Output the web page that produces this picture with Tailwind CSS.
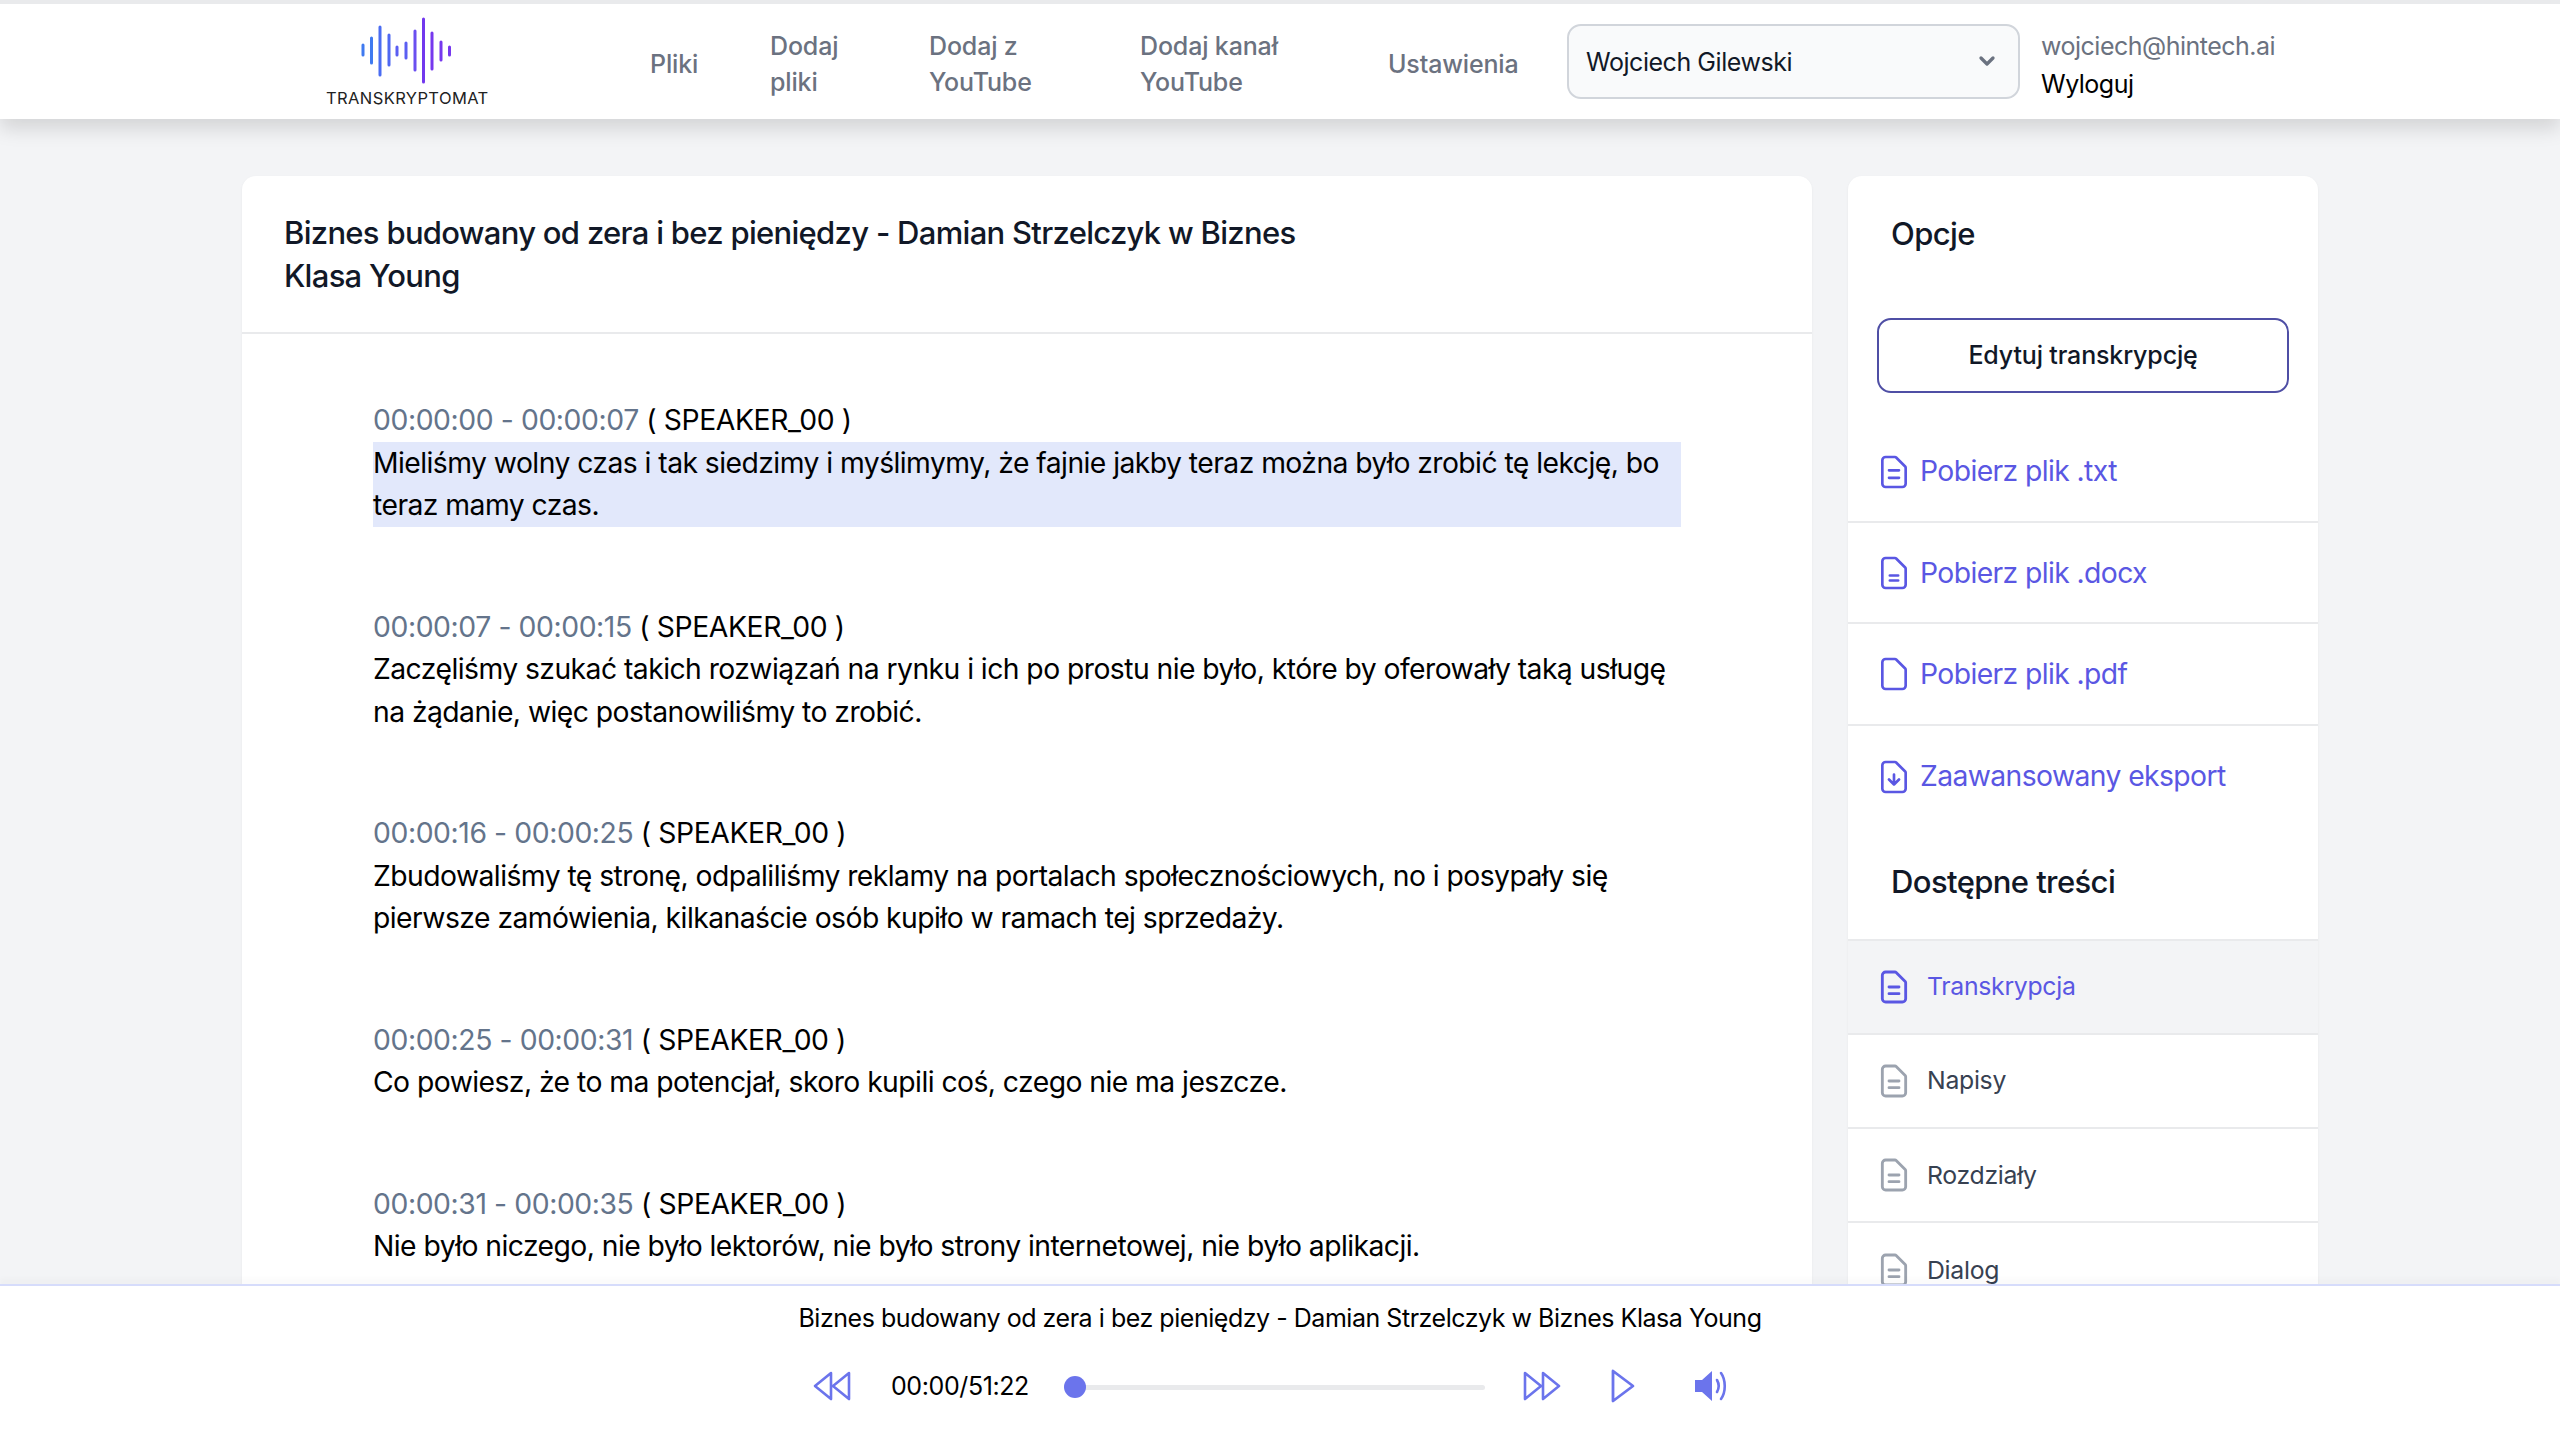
<!DOCTYPE html>
<html lang="pl">
<head>
<meta charset="utf-8">
<script src="https://cdn.jsdelivr.net/npm/@tailwindcss/browser@4"></script>
<title>Transkryptomat</title>
</head>
<body class="font-['Inter',sans-serif] bg-[#f3f4f6] text-black">
<div class="h-[1449px] flex flex-col overflow-hidden">
  <header class="relative z-10 h-[119px] shrink-0 bg-white border-t-[4px] border-[#e9eaec] shadow-[0_10px_18px_rgba(0,0,0,0.13)] flex items-center text-[25px] font-medium tracking-[-0.15px] text-[#6b7280] leading-[36px]">
    <div class="w-[650px] pl-[326px] shrink-0 flex flex-col items-start mt-[1px]">
      <svg class="ml-[33px] w-[96px] h-[70px]" viewBox="0 0 96 70" fill="none" stroke-width="3" stroke-linecap="round">
        <path stroke="#3f7af0" d="M4 29V39M12.500 22V47"/>
        <path stroke="#4a6cf2" d="M21 11V59"/>
        <path stroke="#4f68f2" d="M30 19V49"/>
        <path stroke="#5a5ef2" d="M38 31V39M47 27V42"/>
        <path stroke="#6a4ff0" d="M56 15V54"/>
        <path stroke="#7238ee" d="M64.500 3V66"/>
        <path stroke="#7638ee" d="M73 17V53M82 26V44M90.500 31V39"/>
      </svg>
      <span class="text-[16.500px] leading-[20px] font-normal text-[#222] tracking-[0.4px] mt-[2px]">TRANSKRYPTOMAT</span>
    </div>
    <a class="w-[120px] shrink-0 mt-[5px]">Pliki</a>
    <a class="w-[159px] shrink-0 mt-[5px]">Dodaj<br>pliki</a>
    <a class="w-[211px] shrink-0 mt-[5px]">Dodaj z<br>YouTube</a>
    <a class="w-[248px] shrink-0 mt-[5px]">Dodaj kanał<br>YouTube</a>
    <a class="w-[179px] shrink-0 mt-[5px]">Ustawienia</a>
    <div class="w-[453px] h-[75px] shrink-0 -mt-[1px] rounded-[14px] border-2 border-[#d1d5db] bg-[#f9fafb] flex items-center justify-between pl-[17px] pr-[16px] text-[#111827] font-normal tracking-[-0.45px]">
      <span class="mt-[2px]">Wojciech Gilewski</span>
      <svg class="w-[30px] h-[30px] text-[#6b7280]" viewBox="0 0 20 20" fill="none" stroke="currentColor" stroke-width="2.200" stroke-linecap="round" stroke-linejoin="round"><path d="M6 8l4 4 4-4"/></svg>
    </div>
    <div class="ml-[21px] flex flex-col font-normal text-[25px] leading-[38px] tracking-[-0.5px] mt-[6px]">
      <span class="text-[#6b7280]">wojciech@hintech.ai</span>
      <span class="text-black">Wyloguj</span>
    </div>
  </header>

  <main class="flex-1 min-h-0 overflow-hidden pt-[57px] pl-[242px] flex items-start gap-[36px]">
    <section class="w-[1570px] min-h-[1300px] shrink-0 bg-white rounded-t-[14px] shadow-[0_1px_3px_rgba(0,0,0,0.05)]">
      <div class="h-[158px] border-b-2 border-[#e9eaec] pl-[42px] pt-[36px]">
        <h1 class="w-[1040px] text-[31px] leading-[42.500px] font-medium tracking-[-0.7px] text-[#111827]">Biznes budowany od zera i bez pieniędzy - Damian Strzelczyk w Biznes Klasa Young</h1>
      </div>
      <div class="pt-[65px] px-[131px] text-[28.300px] leading-[42.500px] tracking-[-0.55px] flex flex-col gap-[79px]">
        <div><div class="tracking-[-0.4px]"><span class="text-[#64748b]">00:00:00 - 00:00:07</span> ( SPEAKER_00 )</div><p class="bg-[#e2e8fb]">Mieliśmy wolny czas i tak siedzimy i myślimymy, że fajnie jakby teraz można było zrobić tę lekcję, bo teraz mamy czas.</p></div>
        <div><div class="tracking-[-0.4px]"><span class="text-[#64748b]">00:00:07 - 00:00:15</span> ( SPEAKER_00 )</div><p>Zaczęliśmy szukać takich rozwiązań na rynku i ich po prostu nie było, które by oferowały taką usługę na żądanie, więc postanowiliśmy to zrobić.</p></div>
        <div><div class="tracking-[-0.4px]"><span class="text-[#64748b]">00:00:16 - 00:00:25</span> ( SPEAKER_00 )</div><p>Zbudowaliśmy tę stronę, odpaliliśmy reklamy na portalach społecznościowych, no i posypały się pierwsze zamówienia, kilkanaście osób kupiło w ramach tej sprzedaży.</p></div>
        <div><div class="tracking-[-0.4px]"><span class="text-[#64748b]">00:00:25 - 00:00:31</span> ( SPEAKER_00 )</div><p>Co powiesz, że to ma potencjał, skoro kupili coś, czego nie ma jeszcze.</p></div>
        <div><div class="tracking-[-0.4px]"><span class="text-[#64748b]">00:00:31 - 00:00:35</span> ( SPEAKER_00 )</div><p>Nie było niczego, nie było lektorów, nie było strony internetowej, nie było aplikacji.</p></div>
      </div>
    </section>

    <aside class="w-[470px] shrink-0 bg-white rounded-t-[14px] shadow-[0_1px_3px_rgba(0,0,0,0.05)]">
      <h2 class="pl-[43px] pt-[36px] text-[31px] leading-[43px] font-medium tracking-[-0.6px] text-[#111827]">Opcje</h2>
      <div class="mx-[29px] mt-[63px] h-[75px] rounded-[14px] border-[2.500px] border-[#4f4fa5] flex items-center justify-center text-[25px] font-medium tracking-[-0.15px] text-[#111827]">Edytuj transkrypcję</div>
      <div class="mt-[29px] text-[#5a57e3] text-[28.300px] tracking-[-0.6px]">
        <a class="h-[101.200px] border-b-2 border-[#e9eaec] flex items-center pl-[27px] gap-[7px]">
          <svg class="w-[40px] h-[40px] -ml-[1px] -mr-[1px] mt-[1px]" viewBox="0 0 24 24" fill="none" stroke="currentColor" stroke-width="1.600" stroke-linecap="round" stroke-linejoin="round"><path d="M9 11h6M9 15.500h6M17 21H7a2 2 0 01-2-2V5a2 2 0 012-2h5.586a1 1 0 01.707.293l5.414 5.414a1 1 0 01.293.707V19a2 2 0 01-2 2z"/></svg>
          Pobierz plik .txt</a>
        <a class="h-[101.200px] border-b-2 border-[#e9eaec] flex items-center pl-[27px] gap-[7px]">
          <svg class="w-[40px] h-[40px] -ml-[1px] -mr-[1px] mt-[1px]" viewBox="0 0 24 24" fill="none" stroke="currentColor" stroke-width="1.600" stroke-linecap="round" stroke-linejoin="round"><path d="M9.500 13.500h5M9.500 16.500h5M17 21H7a2 2 0 01-2-2V5a2 2 0 012-2h5.586a1 1 0 01.707.293l5.414 5.414a1 1 0 01.293.707V19a2 2 0 01-2 2z"/></svg>
          Pobierz plik .docx</a>
        <a class="h-[101.200px] border-b-2 border-[#e9eaec] flex items-center pl-[27px] gap-[7px]">
          <svg class="w-[40px] h-[40px] -ml-[1px] -mr-[1px] mt-[1px]" viewBox="0 0 24 24" fill="none" stroke="currentColor" stroke-width="1.600" stroke-linecap="round" stroke-linejoin="round"><path d="M17 21H7a2 2 0 01-2-2V5a2 2 0 012-2h5.586a1 1 0 01.707.293l5.414 5.414a1 1 0 01.293.707V19a2 2 0 01-2 2z"/></svg>
          Pobierz plik .pdf</a>
        <a class="h-[101.200px] flex items-center pl-[27px] gap-[7px]">
          <svg class="w-[40px] h-[40px] -ml-[1px] -mr-[1px] mt-[1px]" viewBox="0 0 24 24" fill="none" stroke="currentColor" stroke-width="1.600" stroke-linecap="round" stroke-linejoin="round"><path d="M12 10.500v6m0 0l-3-3m3 3l3-3M17 21H7a2 2 0 01-2-2V5a2 2 0 012-2h5.586a1 1 0 01.707.293l5.414 5.414a1 1 0 01.293.707V19a2 2 0 01-2 2z"/></svg>
          Zaawansowany eksport</a>
      </div>
      <h2 class="pl-[43px] mt-[33px] h-[79px] text-[31px] leading-[43px] font-medium tracking-[-0.6px] text-[#111827]">Dostępne treści</h2>
      <div class="text-[24.800px] tracking-[-0.3px] text-[#374151] border-t-2 border-[#e9eaec]">
        <a class="h-[94.200px] bg-[#f3f4f6] border-b-2 border-[#e9eaec] flex items-center pl-[26px] gap-[13px] text-[#5a57e3]">
          <svg class="w-[40px] h-[40px]" viewBox="0 0 24 24" fill="none" stroke="currentColor" stroke-width="1.700" stroke-linecap="round" stroke-linejoin="round"><path d="M9 12h6M9 16h6M17 21H7a2 2 0 01-2-2V5a2 2 0 012-2h5.586a1 1 0 01.707.293l5.414 5.414a1 1 0 01.293.707V19a2 2 0 01-2 2z"/></svg>
          Transkrypcja</a>
        <a class="h-[94.200px] border-b-2 border-[#e9eaec] flex items-center pl-[26px] gap-[13px]">
          <svg class="w-[40px] h-[40px] text-[#9ca3af]" viewBox="0 0 24 24" fill="none" stroke="currentColor" stroke-width="1.700" stroke-linecap="round" stroke-linejoin="round"><path d="M9 12h6M9 16h6M17 21H7a2 2 0 01-2-2V5a2 2 0 012-2h5.586a1 1 0 01.707.293l5.414 5.414a1 1 0 01.293.707V19a2 2 0 01-2 2z"/></svg>
          Napisy</a>
        <a class="h-[94.200px] border-b-2 border-[#e9eaec] flex items-center pl-[26px] gap-[13px]">
          <svg class="w-[40px] h-[40px] text-[#9ca3af]" viewBox="0 0 24 24" fill="none" stroke="currentColor" stroke-width="1.700" stroke-linecap="round" stroke-linejoin="round"><path d="M9 12h6M9 16h6M17 21H7a2 2 0 01-2-2V5a2 2 0 012-2h5.586a1 1 0 01.707.293l5.414 5.414a1 1 0 01.293.707V19a2 2 0 01-2 2z"/></svg>
          Rozdziały</a>
        <a class="h-[94.200px] flex items-center pl-[26px] gap-[13px]">
          <svg class="w-[40px] h-[40px] text-[#9ca3af]" viewBox="0 0 24 24" fill="none" stroke="currentColor" stroke-width="1.700" stroke-linecap="round" stroke-linejoin="round"><path d="M9 12h6M9 16h6M17 21H7a2 2 0 01-2-2V5a2 2 0 012-2h5.586a1 1 0 01.707.293l5.414 5.414a1 1 0 01.293.707V19a2 2 0 01-2 2z"/></svg>
          Dialog</a>
      </div>
    </aside>
  </main>

  <footer class="relative z-10 h-[165px] shrink-0 bg-white border-t-2 border-[#d6dcfb] shadow-[0_-6px_5px_rgba(0,0,0,0.02)] flex flex-col items-center">
    <div class="mt-[17px] text-[25px] leading-[30px] tracking-[-0.47px] text-black">Biznes budowany od zera i bez pieniędzy - Damian Strzelczyk w Biznes Klasa Young</div>
    <div class="mt-[34px] w-full h-[40px] flex items-center pl-[811px] text-[#6b74ec]">
      <svg class="w-[42px] h-[32px] shrink-0 -mt-[3px]" viewBox="0 0 42 32" fill="none" stroke="currentColor" stroke-width="2.600" stroke-linejoin="round"><path d="M20 3L4 16l16 13zM38 3L22 16l16 13z"/></svg>
      <span class="ml-[38px] w-[141px] shrink-0 text-[25px] tracking-[-0.4px] text-black">00:00/51:22</span>
      <div class="ml-[33px] w-[420px] h-[5px] shrink-0 rounded-full bg-[#e9eaec] relative">
        <span class="absolute -left-[1px] -top-[9px] w-[22px] h-[22px] rounded-full bg-[#6b74ec]"></span>
      </div>
      <svg class="ml-[36px] w-[42px] h-[32px] shrink-0 -mt-[3px]" viewBox="0 0 42 32" fill="none" stroke="currentColor" stroke-width="2.600" stroke-linejoin="round"><path d="M4 3l16 13L4 29zM22 3l16 13-16 13z"/></svg>
      <svg class="ml-[46px] w-[32px] h-[36px] shrink-0 -mt-[3px]" viewBox="0 0 32 36" fill="none" stroke="currentColor" stroke-width="2.800" stroke-linejoin="round"><path d="M4 3l20 15L4 33z"/></svg>
      <svg class="ml-[51px] w-[38px] h-[34px] shrink-0 -mt-[3px]" viewBox="0 0 38 34" fill="none" stroke="currentColor" stroke-width="2.600" stroke-linecap="round"><path fill="currentColor" stroke="none" d="M3 11h7L20 2v30L10 23H3z"/><path d="M25 11c2 3.500 2 8.500 0 12M29 4c5 7 5 19 0 26"/></svg>
    </div>
  </footer>
</div>
</body>
</html>
